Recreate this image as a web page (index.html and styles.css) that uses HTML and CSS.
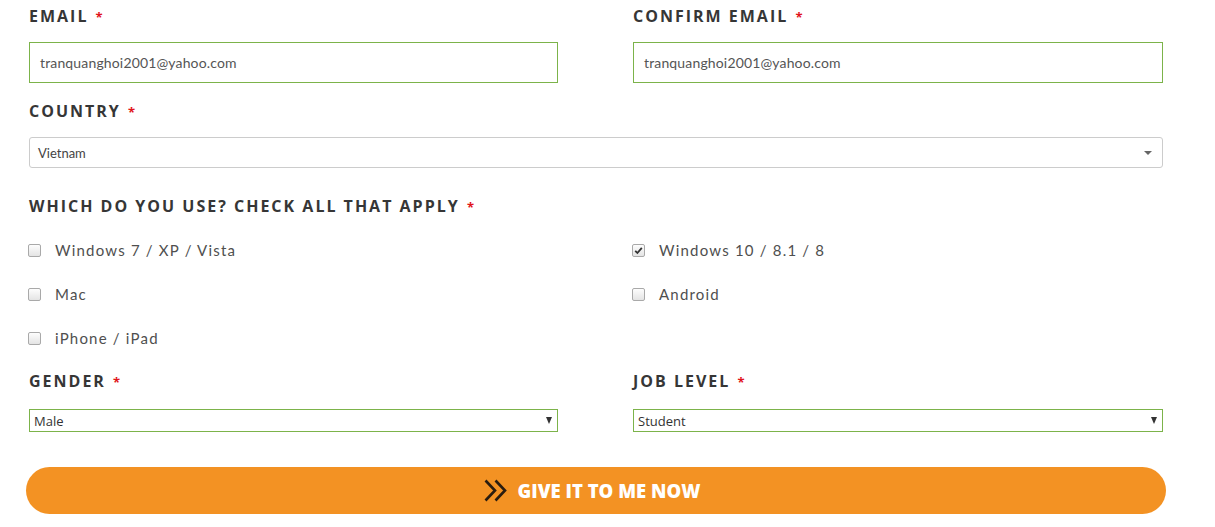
FILE: index.html
```html
<!DOCTYPE html>
<html>
<head>
<meta charset="utf-8">
<link rel="stylesheet" href="styles.css">
</head>
<body>
<form class="form">
  <div class="row two">
    <div class="field">
      <div class="label">EMAIL <span class="req">*</span></div>
      <div class="input">tranquanghoi2001@yahoo.com</div>
    </div>
    <div class="field">
      <div class="label">CONFIRM EMAIL <span class="req">*</span></div>
      <div class="input">tranquanghoi2001@yahoo.com</div>
    </div>
  </div>

  <div class="field country">
    <div class="label">COUNTRY <span class="req">*</span></div>
    <div class="select-round"><span>Vietnam</span><span class="caret-sm"></span></div>
  </div>

  <div class="field uses">
    <div class="label">WHICH DO YOU USE? CHECK ALL THAT APPLY <span class="req">*</span></div>
    <div class="checks">
      <div class="check"><span class="box"></span><span class="ctext">Windows 7 / XP / Vista</span></div>
      <div class="check"><span class="box checked"><svg viewBox="0 0 13 13" width="13" height="13"><path d="M3.2 6.8 L5.4 9 L9.8 3.8" fill="none" stroke="#333" stroke-width="1.8"/></svg></span><span class="ctext">Windows 10 / 8.1 / 8</span></div>
      <div class="check"><span class="box"></span><span class="ctext">Mac</span></div>
      <div class="check"><span class="box"></span><span class="ctext">Android</span></div>
      <div class="check"><span class="box"></span><span class="ctext">iPhone / iPad</span></div>
    </div>
  </div>

  <div class="row two last">
    <div class="field">
      <div class="label">GENDER <span class="req">*</span></div>
      <div class="select-flat"><span>Male</span><span class="caret"></span></div>
    </div>
    <div class="field">
      <div class="label">JOB LEVEL <span class="req">*</span></div>
      <div class="select-flat"><span>Student</span><span class="caret"></span></div>
    </div>
  </div>

  <button type="button" class="cta">
    <svg class="chev" viewBox="0 0 24 23" width="24" height="23"><path d="M1.5 1.5 L11 11.5 L1.5 21.5 M11.5 1.5 L21 11.5 L11.5 21.5" fill="none" stroke="#2a1d10" stroke-width="2.6"/></svg>
    <span>GIVE IT TO ME NOW</span>
  </button>
</form>
</body>
</html>
```

FILE: styles.css
```css
html, body {
  margin: 0;
  padding: 0;
  background: #ffffff;
}

.form {
  width: 1134px;
  padding: 6px 0 0 29px;
  font-family: "Lato", "Open Sans", sans-serif;
}

.two {
  display: grid;
  grid-template-columns: 529px 530px;
  column-gap: 75px;
}

.label {
  font-family: "Open Sans", "Lato", sans-serif;
  font-weight: 700;
  font-size: 16px;
  line-height: 20px;
  height: 20px;
  letter-spacing: 2px;
  color: #363636;
  margin-bottom: 16px;
  white-space: nowrap;
}

.req {
  color: #e1141b;
  font-size: 13px;
  letter-spacing: 0;
  margin-left: 1px;
}

.input {
  box-sizing: border-box;
  height: 41px;
  border: 1px solid #7cb34a;
  padding: 0 10px;
  display: flex;
  align-items: center;
  font-size: 14px;
  letter-spacing: 0.15px;
  color: #555;
}

.country {
  margin-top: 18px;
}

.select-round {
  box-sizing: border-box;
  width: 1134px;
  height: 31px;
  border: 1px solid #cccccc;
  border-radius: 3px;
  display: flex;
  align-items: center;
  justify-content: space-between;
  padding: 0 10px 0 8px;
  font-size: 13px;
  color: #444;
}

.caret-sm {
  width: 0;
  height: 0;
  border-left: 4px solid transparent;
  border-right: 4px solid transparent;
  border-top: 4px solid #666;
}

.uses {
  margin-top: 28px;
}

.uses .label {
  margin-bottom: 22px;
}

.checks {
  display: grid;
  grid-template-columns: 604px 530px;
  row-gap: 20px;
}

.check {
  display: flex;
  align-items: center;
  height: 24px;
}

.box {
  box-sizing: border-box;
  width: 13px;
  height: 13px;
  border: 1px solid #a9a9a9;
  border-radius: 2px;
  background: linear-gradient(#fdfdfd, #e4e4e4);
  display: flex;
  align-items: center;
  justify-content: center;
  margin-left: -1px;
}

.box svg {
  display: block;
  margin: -1px;
}

.ctext {
  margin-left: 14px;
  font-size: 15px;
  letter-spacing: 1.2px;
  color: #4f4f4f;
}

.last {
  margin-top: 21px;
}

.last .label {
  margin-bottom: 18px;
}

.select-flat {
  box-sizing: border-box;
  height: 23px;
  border: 1px solid #7cb34a;
  display: flex;
  align-items: center;
  justify-content: space-between;
  padding: 0 5px 0 4px;
  font-size: 13px;
  color: #333;
  font-family: "Open Sans", "Lato", sans-serif;
}

.caret {
  width: 0;
  height: 0;
  border-left: 3.5px solid transparent;
  border-right: 3.5px solid transparent;
  border-top: 7px solid #333;
}

.cta {
  margin: 35px 0 0 -3px;
  width: 1140px;
  height: 47px;
  border: none;
  border-radius: 24px;
  background: #f39223;
  display: flex;
  align-items: center;
  justify-content: center;
  gap: 10px;
  cursor: pointer;
  padding: 0 8px 0 0;
}

.cta span {
  font-family: "Open Sans", sans-serif;
  font-weight: 800;
  font-size: 18.5px;
  color: #ffffff;
  letter-spacing: 0;
}

.chev {
  display: block;
}
```
